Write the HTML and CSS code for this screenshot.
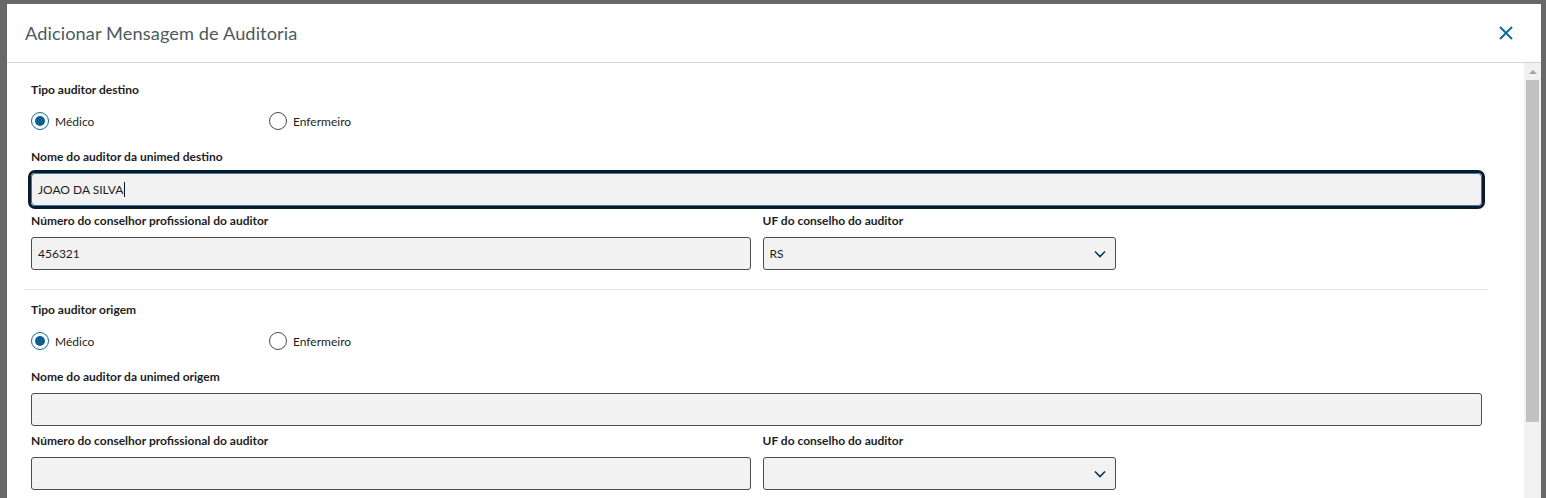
FILE: index.html
```html
<!DOCTYPE html>
<html lang="pt-BR">
<head>
<meta charset="utf-8">
<title>Adicionar Mensagem de Auditoria</title>
<link rel="stylesheet" href="styles.css">
</head>
<body>
<div class="modal">
  <header class="modal-header">
    <h1 class="modal-title">Adicionar Mensagem de Auditoria</h1>
    <button class="close-btn" aria-label="Fechar">
      <svg width="14" height="14" viewBox="0 0 14 14"><path d="M1 1 L13 13 M13 1 L1 13" stroke="#0c6c94" stroke-width="2" fill="none"/></svg>
    </button>
  </header>
  <div class="modal-body">
    <div class="content">
      <section class="section">
        <div class="row">
          <div class="field col-12">
            <div class="label">Tipo auditor destino</div>
            <div class="radio-group">
              <label class="radio"><span class="circle checked"></span>Médico</label>
              <label class="radio"><span class="circle"></span>Enfermeiro</label>
            </div>
          </div>
        </div>
        <div class="row">
          <div class="field col-12">
            <div class="label">Nome do auditor da unimed destino</div>
            <div class="input focused">JOAO DA SILVA<span class="caret"></span></div>
          </div>
        </div>
        <div class="row">
          <div class="field col-6">
            <div class="label">Número do conselhor profissional do auditor</div>
            <div class="input">456321</div>
          </div>
          <div class="field col-3">
            <div class="label">UF do conselho do auditor</div>
            <div class="input select">RS
              <svg class="chevron" width="12" height="8" viewBox="0 0 12 8"><path d="M1 1.5 L6 6.5 L11 1.5" stroke="#0c3550" stroke-width="1.6" fill="none"/></svg>
            </div>
          </div>
        </div>
      </section>
      <hr class="divider">
      <section class="section second">
        <div class="row">
          <div class="field col-12">
            <div class="label">Tipo auditor origem</div>
            <div class="radio-group">
              <label class="radio"><span class="circle checked"></span>Médico</label>
              <label class="radio"><span class="circle"></span>Enfermeiro</label>
            </div>
          </div>
        </div>
        <div class="row">
          <div class="field col-12">
            <div class="label">Nome do auditor da unimed origem</div>
            <div class="input"></div>
          </div>
        </div>
        <div class="row">
          <div class="field col-6">
            <div class="label">Número do conselhor profissional do auditor</div>
            <div class="input"></div>
          </div>
          <div class="field col-3">
            <div class="label">UF do conselho do auditor</div>
            <div class="input select">
              <svg class="chevron" width="12" height="8" viewBox="0 0 12 8"><path d="M1 1.5 L6 6.5 L11 1.5" stroke="#0c3550" stroke-width="1.6" fill="none"/></svg>
            </div>
          </div>
        </div>
      </section>
    </div>
    <div class="scrollbar">
      <div class="scroll-arrow"></div>
      <div class="scroll-thumb"></div>
    </div>
  </div>
</div>
</body>
</html>
```

FILE: styles.css
```css
html, body {
  margin: 0;
  height: 100%;
}
body {
  background: #686868;
  padding: 4px 0 0 7px;
  box-sizing: border-box;
  overflow: hidden;
  font-family: "Lato", "Noto Sans", sans-serif;
}
.modal {
  width: 1534px;
  height: 494px;
  background: #fff;
  display: flex;
  flex-direction: column;
  overflow: hidden;
}
.modal-header {
  height: 58px;
  flex: none;
  border-bottom: 1px solid #d4d4d4;
  display: flex;
  align-items: center;
  justify-content: space-between;
  padding: 0 28px 0 18px;
}
.modal-title {
  margin: 0;
  font-size: 18.2px;
  font-weight: 400;
  color: #4b5b60;
  letter-spacing: 0.1px;
}
.close-btn {
  border: 0;
  background: none;
  padding: 0;
  width: 14px;
  height: 14px;
  display: flex;
}
.modal-body {
  flex: 1;
  display: flex;
  min-height: 0;
}
.content {
  flex: 1;
  padding: 19px 36px 0 18px;
}
.row {
  display: flex;
}
.field {
  box-sizing: border-box;
  padding: 0 6px;
}
.col-12 { width: 100%; }
.col-6 { width: 50%; }
.col-3 { width: 25%; }
.label {
  font-size: 12px;
  line-height: 16px;
  font-weight: 700;
  color: #1d1d1d;
  margin-bottom: 8px;
}
.radio-group {
  display: flex;
  margin-top: 14px;
  margin-bottom: 19px;
}
.radio {
  display: flex;
  align-items: center;
  width: 238px;
  font-size: 12px;
  color: #1d1d1d;
  height: 18px;
}
.circle {
  width: 18px;
  height: 18px;
  box-sizing: border-box;
  border: 1px solid #4a4a4a;
  border-radius: 50%;
  margin-right: 6px;
  background: #fff;
  display: flex;
  align-items: center;
  justify-content: center;
}
.circle.checked {
  border: 1.5px solid #0c6c94;
}
.circle.checked::after {
  content: "";
  width: 10px;
  height: 10px;
  border-radius: 50%;
  background: #0c5f8e;
}
.input {
  height: 33px;
  box-sizing: border-box;
  border: 1px solid #4d4d4d;
  border-radius: 3px;
  background: #f2f2f2;
  font-size: 12px;
  color: #1d1d1d;
  padding: 0 6px;
  display: flex;
  align-items: center;
  margin-bottom: 7px;
}
.input.focused {
  border-color: #3a7bab;
  outline: 3px solid #0a1b2c;
  border-radius: 4px;
}
.caret {
  width: 1px;
  height: 15px;
  background: #111;
  margin-left: 1px;
}
.select {
  justify-content: space-between;
  padding-right: 9px;
}
.select .chevron {
  margin-left: auto;
}
.divider {
  border: 0;
  border-top: 1px solid #e3e3e3;
  margin: 12px 0 12px 0;
  height: 0;
}
.scrollbar {
  width: 17px;
  flex: none;
  background: #f1f1f1;
  display: flex;
  flex-direction: column;
  align-items: center;
}
.scroll-arrow {
  margin-top: 7px;
  width: 0;
  height: 0;
  border-left: 4px solid transparent;
  border-right: 4px solid transparent;
  border-bottom: 4px solid #a3a3a3;
}
.scroll-thumb {
  margin-top: 6px;
  width: 13px;
  height: 342px;
  background: #c1c1c1;
}
```
